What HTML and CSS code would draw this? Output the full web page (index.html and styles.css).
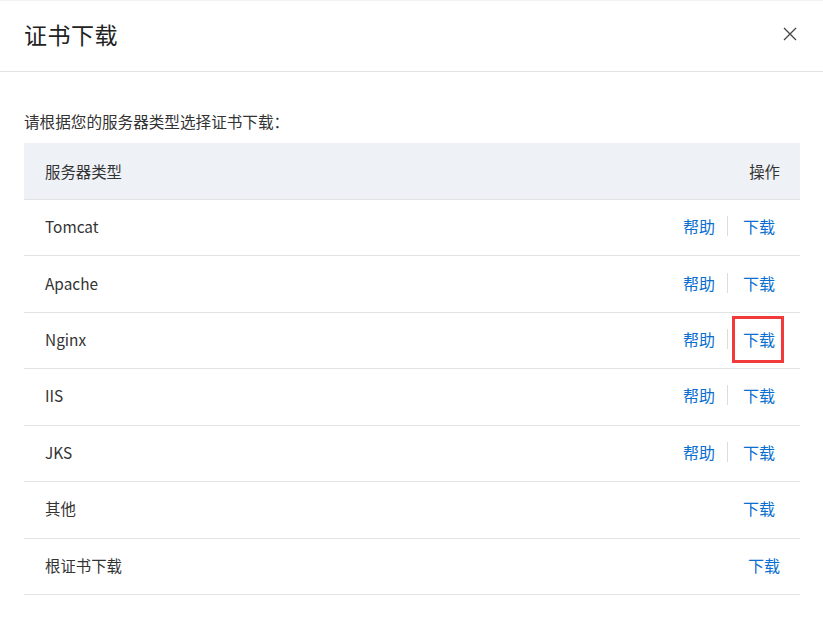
FILE: index.html
```html
<!DOCTYPE html>
<html lang="zh-CN">
<head>
    <meta charset="UTF-8">
    <title>证书下载</title>
    <link rel="stylesheet" href="styles.css">
</head>
<body>
    <div class="dialog">
        <header class="dialog-head">
            <h1>证书下载</h1>
            <span class="close">
                <svg width="14" height="14" viewBox="0 0 14 14"><path d="M1 1L13 13M13 1L1 13" stroke="#444" stroke-width="1.3" fill="none"/></svg>
            </span>
        </header>

        <div class="dialog-body">
            <p class="intro">请根据您的服务器类型选择证书下载：</p>

            <div class="cert-table">
                <div class="row head">
                    <span>服务器类型</span>
                    <span class="ops">操作</span>
                </div>
                <div class="row">
                    <span>Tomcat</span>
                    <span class="ops"><a class="link">帮助</a><i class="sep"></i><a class="link">下载</a></span>
                </div>
                <div class="row">
                    <span>Apache</span>
                    <span class="ops"><a class="link">帮助</a><i class="sep"></i><a class="link">下载</a></span>
                </div>
                <div class="row">
                    <span>Nginx</span>
                    <span class="ops"><a class="link">帮助</a><i class="sep"></i><a class="link marked">下载</a></span>
                </div>
                <div class="row">
                    <span>IIS</span>
                    <span class="ops"><a class="link">帮助</a><i class="sep"></i><a class="link">下载</a></span>
                </div>
                <div class="row">
                    <span>JKS</span>
                    <span class="ops"><a class="link">帮助</a><i class="sep"></i><a class="link">下载</a></span>
                </div>
                <div class="row">
                    <span>其他</span>
                    <span class="ops"><a class="link">下载</a></span>
                </div>
                <div class="row">
                    <span>根证书下载</span>
                    <span class="ops"><a class="link last">下载</a></span>
                </div>
            </div>
        </div>
    </div>
</body>
</html>
```

FILE: styles.css
```css
body {
    margin: 0;
    background: #fff;
    color: #333;
    font-family: "Noto Sans CJK SC", "Noto Sans", sans-serif;
}
.dialog {
    width: 823px;
    border-top: 1px solid #f2f2f2;
}
.dialog-head {
    height: 70px;
    border-bottom: 1px solid #e3e3e3;
    display: flex;
    align-items: center;
    justify-content: space-between;
    padding: 0 26px 0 24px;
}
.dialog-head h1 {
    margin: -5px 0 0;
    font-size: 23px;
    font-weight: normal;
    color: #222;
    letter-spacing: 0.5px;
}
.close {
    display: flex;
    margin-top: -4px;
}
.dialog-body {
    padding: 37px 23px 0 24px;
}
.intro {
    margin: 0 0 10px;
    font-size: 15.6px;
    line-height: 24px;
    color: #333;
}
.cert-table {
    width: 776px;
}
.row {
    height: 56.43px;
    box-sizing: border-box;
    border-bottom: 1px solid #e3e3e3;
    display: flex;
    align-items: center;
    justify-content: space-between;
    padding: 0 20px 3px 21px;
    font-size: 15.4px;
    color: #333;
}
.row.head {
    height: 57px;
    padding-bottom: 1px;
    background: #eef1f6;
}
.ops {
    display: flex;
    align-items: center;
}
.link {
    color: #0a6fd0;
    cursor: pointer;
    font-size: 16px;
    line-height: 22px;
    margin-right: 5px;
    position: relative;
}
.link.last {
    margin-right: 0;
}
.sep {
    display: inline-block;
    width: 1px;
    height: 20px;
    background: #dcdcdc;
    margin: 0 15px 0 7px;
}
.marked::after {
    content: "";
    position: absolute;
    left: -11px;
    right: -9px;
    top: -12px;
    bottom: -13px;
    border: 3px solid #f23a3a;
}
```
